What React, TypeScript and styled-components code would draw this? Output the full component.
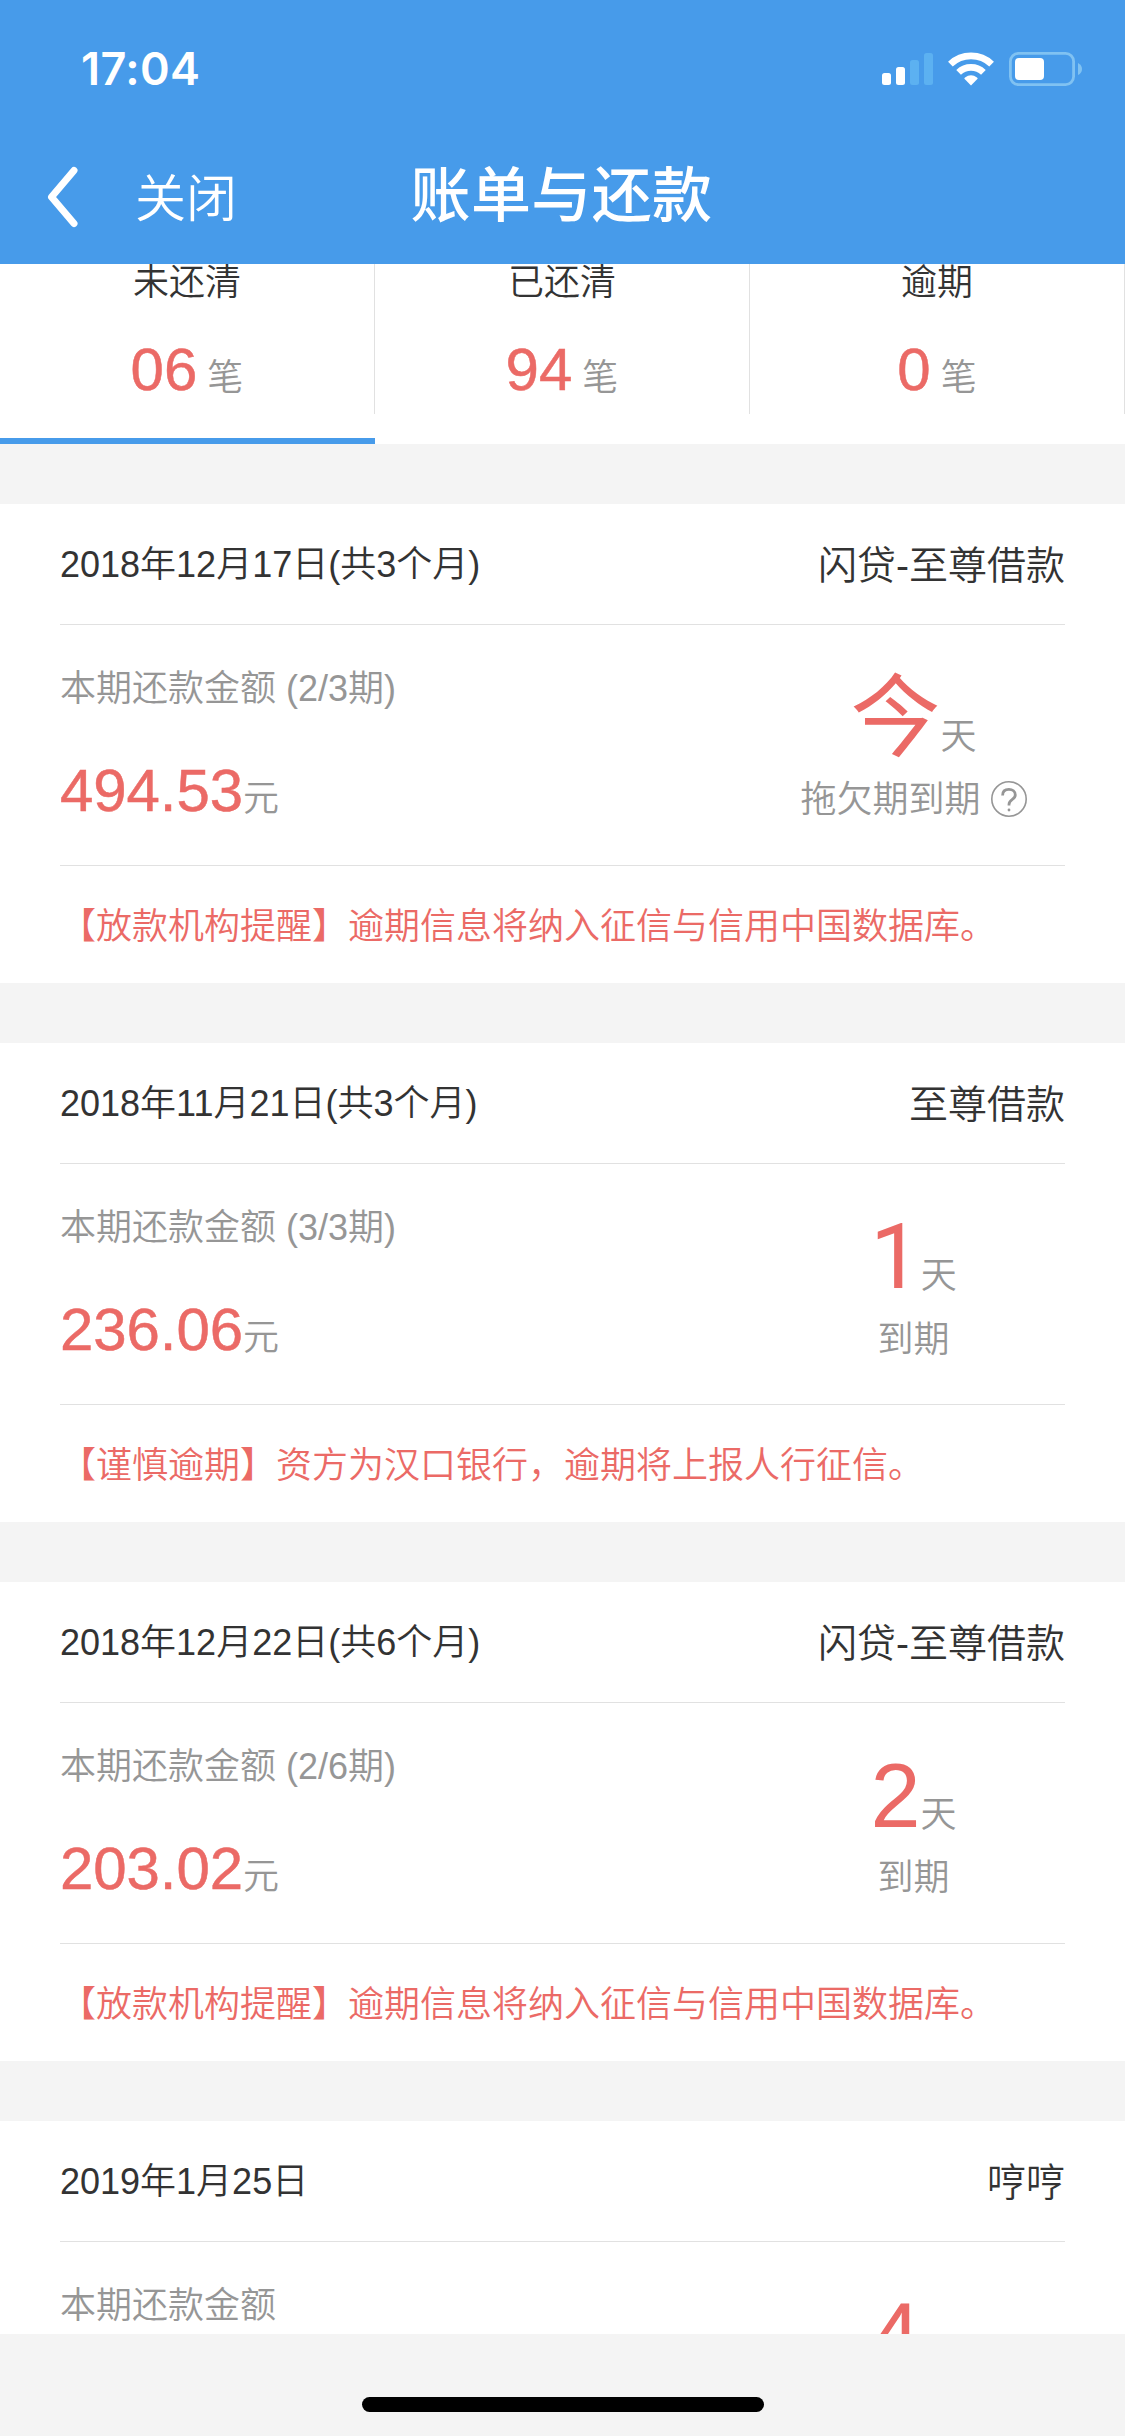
import React from 'react';
import styled, { createGlobalStyle } from 'styled-components';

const BLUE = '#479bea';
const RED = '#eb6a66';
const GRAY = '#969696';
const LINE = '#e1e1e1';

const GlobalStyle = createGlobalStyle`
  *, *::before, *::after { box-sizing: border-box; }
  body {
    margin: 0;
    background: #f4f4f4;
    font-family: "Liberation Sans", "Noto Sans CJK SC", sans-serif;
    font-weight: 350;
    color: #333;
  }
`;

const Screen = styled.div`
  display: flex;
  flex-direction: column;
  width: 1125px;
  height: 2436px;
  overflow: hidden;
  background: #f4f4f4;
`;

const Header = styled.header`
  flex: none;
  height: 264px;
  background: ${BLUE};
  color: #fff;
`;

const StatusBar = styled.div`
  display: flex;
  align-items: center;
  justify-content: space-between;
  height: 138px;
  padding: 0 42px 0 81px;
`;

const Clock = styled.span`
  font: 600 45px/60px Inter, sans-serif;
  letter-spacing: 0.4px;
`;

const StatusIcons = styled.div`
  display: flex;
  align-items: center;

  svg { display: block; }
`;

const NavBar = styled.nav`
  display: grid;
  grid-template-columns: 360px 1fr 362px;
  align-items: center;
  height: 118px;
`;

const NavLeft = styled.div`
  display: flex;
  align-items: center;
  padding-left: 46px;

  svg { display: block; }
`;

const CloseLabel = styled.span`
  margin-left: 55px;
  padding-top: 6px;
  font-size: 51px;
  font-weight: 350;
  line-height: 64px;
`;

const Title = styled.h1`
  margin: 0;
  font-size: 60px;
  font-weight: 500;
  line-height: 76px;
  letter-spacing: 0.4px;
  text-align: center;
`;

const Content = styled.main`
  flex: none;
  display: flex;
  flex-direction: column;
  gap: 60px;
  height: 2070px;
`;

const Tabs = styled.div`
  flex: none;
  display: grid;
  grid-template-columns: repeat(3, 1fr);
  height: 180px;
  background: #fff;
`;

const Tab = styled.div<{ $active?: boolean }>`
  display: flex;
  flex-direction: column;
  border-bottom: 6px solid ${(p) => (p.$active ? BLUE : '#fff')};
`;

const TabBody = styled.div`
  display: flex;
  flex-direction: column;
  align-items: center;
  height: 150px;
  border-right: 1px solid ${LINE};
`;

const TabName = styled.span`
  font-size: 36px;
  line-height: 37px;
`;

const TabCount = styled.span`
  margin-top: 29px;
  color: ${RED};
  font-size: 60px;
  line-height: 80px;
  -webkit-text-stroke: 0.5px ${RED};
`;

const Unit = styled.span<{ $gap?: boolean }>`
  margin-left: ${(p) => (p.$gap ? 10 : 0)}px;
  color: ${GRAY};
  font-size: 36px;
  line-height: 1;
  -webkit-text-stroke: 0;
`;

const Card = styled.section`
  flex: none;
  height: 479px;
  padding: 0 60px;
  background: #fff;
`;

const CardHead = styled.div`
  display: flex;
  justify-content: space-between;
  height: 121px;
  border-bottom: 1px solid ${LINE};
`;

const DateText = styled.span`
  font-size: 36px;
  line-height: 121px;
`;

const Product = styled.span`
  font-size: 39px;
  line-height: 123px;
`;

const CardBody = styled.div`
  display: flex;
  justify-content: space-between;
  height: 241px;
  border-bottom: 1px solid ${LINE};
`;

const Payment = styled.div`
  display: flex;
  flex-direction: column;
  padding-top: 39px;
`;

const Label = styled.span`
  color: ${GRAY};
  font-size: 36px;
  line-height: 49px;
`;

const Amount = styled.span`
  margin-top: 37px;
  color: ${RED};
  font-size: 60px;
  line-height: 81px;
  letter-spacing: -0.1px;
  -webkit-text-stroke: 0.5px ${RED};
`;

const Due = styled.div`
  display: flex;
  flex-direction: column;
  align-items: center;
  width: 303px;
  padding-top: 41px;
`;

const Days = styled.span`
  color: ${RED};
  font-size: 90px;
  font-weight: 400;
  line-height: 104px;
`;

const DaysUnit = styled(Unit)`
  font-weight: 350;
`;

/* A lone "1" is set without the foot that the text face gives it. */
const DayCount = styled.span<{ $footless: boolean }>`
  font-family: ${(p) => (p.$footless ? 'Roboto, sans-serif' : 'inherit')};
`;

const DueNote = styled.div`
  display: flex;
  align-items: center;
  margin-top: 5px;
  color: ${GRAY};
  font-size: 36px;
  line-height: 50px;
`;

const HelpIcon = styled.svg`
  display: block;
  margin: 0 0 3px 10px;
`;

const Notice = styled.p`
  margin: 0;
  color: ${RED};
  font-size: 36px;
  line-height: 122px;
`;

const HomeArea = styled.footer`
  position: relative;
  display: flex;
  justify-content: center;
  height: 102px;
  padding-top: 63px;
  background: #f4f4f4;
`;

const HomeIndicator = styled.div`
  width: 402px;
  height: 15px;
  border-radius: 8px;
  background: #000;
`;

const WifiSvg = styled.svg`
  margin-left: 14px;
`;

const BatterySvg = styled.svg`
  margin-left: 15px;
`;

const Signal = () => (
  <svg width="52" height="34" viewBox="0 0 52 34">
    <rect x="0" y="21" width="9" height="12" rx="2.5" fill="#fff" />
    <rect x="14" y="15" width="9" height="18" rx="2.5" fill="#fff" />
    <rect x="28" y="8" width="9" height="25" rx="2.5" fill="#5cb1f1" />
    <rect x="42" y="1" width="9" height="32" rx="2.5" fill="#5cb1f1" />
  </svg>
);

const Wifi = () => (
  <WifiSvg width="46" height="34" viewBox="0 0 46 34">
    <g fill="none" stroke="#fff" strokeWidth="6.8">
      <path d="M2.4 12.1A30 30 0 0 1 43.6 12.1" />
      <path d="M10.6 20.4A18 18 0 0 1 35.4 20.4" />
    </g>
    <path d="M23 33.4 16.4 26.8Q16.2 26 17 25.4A10.6 10.6 0 0 1 29 25.4Q29.8 26 29.6 26.8Z" fill="#fff" />
  </WifiSvg>
);

const Battery = () => (
  <BatterySvg width="74" height="34" viewBox="0 0 74 34">
    <rect x="1.4" y="1.4" width="63.2" height="31.2" rx="8" fill="none" stroke="#80c2f2" strokeWidth="2.8" />
    <rect x="6" y="6" width="29" height="22" rx="4" fill="#fff" />
    <path d="M69 11Q73 13 73 17T69 23Z" fill="#80c2f2" />
  </BatterySvg>
);

const Back = () => (
  <svg width="34" height="64" viewBox="0 0 34 64">
    <path d="M28 5.5 5.5 32 28 58.5" fill="none" stroke="#fff" strokeWidth="7" strokeLinecap="round" strokeLinejoin="round" />
  </svg>
);

const Help = () => (
  <HelpIcon width="36" height="36" viewBox="0 0 36 36" fill="none" stroke={GRAY}>
    <circle cx="18" cy="18" r="17.2" strokeWidth="1.6" />
    <path d="M11.6 14.4C11.6 10.4 14.3 8.4 17.9 8.4S24.3 10.5 24.3 14C24.3 18.8 18 18 18 23.6V24.6" strokeWidth="2.8" />
    <circle cx="18" cy="29" r="1.4" fill={GRAY} stroke="none" />
  </HelpIcon>
);

const tabs = [
  { name: '未还清', count: '06' },
  { name: '已还清', count: '94' },
  { name: '逾期', count: '0' },
];

type Bill = {
  date: string;
  product: string;
  label: string;
  amount: string;
  days: string;
  due: string;
  help?: boolean;
  notice?: string;
};

const bills: Bill[] = [
  {
    date: '2018年12月17日(共3个月)',
    product: '闪贷-至尊借款',
    label: '本期还款金额 (2/3期)',
    amount: '494.53',
    days: '今',
    due: '拖欠期到期',
    help: true,
    notice: '【放款机构提醒】逾期信息将纳入征信与信用中国数据库。',
  },
  {
    date: '2018年11月21日(共3个月)',
    product: '至尊借款',
    label: '本期还款金额 (3/3期)',
    amount: '236.06',
    days: '1',
    due: '到期',
    notice: '【谨慎逾期】资方为汉口银行，逾期将上报人行征信。',
  },
  {
    date: '2018年12月22日(共6个月)',
    product: '闪贷-至尊借款',
    label: '本期还款金额 (2/6期)',
    amount: '203.02',
    days: '2',
    due: '到期',
    notice: '【放款机构提醒】逾期信息将纳入征信与信用中国数据库。',
  },
];

const BillCard = ({ bill }: { bill: Bill }) => (
  <Card>
    <CardHead>
      <DateText>{bill.date}</DateText>
      <Product>{bill.product}</Product>
    </CardHead>
    <CardBody>
      <Payment>
        <Label>{bill.label}</Label>
        <Amount>
          {bill.amount}
          <Unit>元</Unit>
        </Amount>
      </Payment>
      <Due>
        <Days>
          <DayCount $footless={bill.days === '1'}>{bill.days}</DayCount>
          <DaysUnit>天</DaysUnit>
        </Days>
        <DueNote>
          {bill.due}
          {bill.help && <Help />}
        </DueNote>
      </Due>
    </CardBody>
    <Notice>{bill.notice}</Notice>
  </Card>
);

/* The last bill is scrolled under the bottom edge: only its upper part shows. */
const PartialBill = () => (
  <Card>
    <CardHead>
      <DateText>2019年1月25日</DateText>
      <Product>哼哼</Product>
    </CardHead>
    <CardBody>
      <Payment>
        <Label>本期还款金额</Label>
      </Payment>
      <Due>
        <Days>
          4<DaysUnit>天</DaysUnit>
        </Days>
      </Due>
    </CardBody>
  </Card>
);

export default function App() {
  return (
    <Screen>
      <GlobalStyle />
      <Header>
        <StatusBar>
          <Clock>17:04</Clock>
          <StatusIcons>
            <Signal />
            <Wifi />
            <Battery />
          </StatusIcons>
        </StatusBar>
        <NavBar>
          <NavLeft>
            <Back />
            <CloseLabel>关闭</CloseLabel>
          </NavLeft>
          <Title>账单与还款</Title>
        </NavBar>
      </Header>
      <Content>
        <Tabs>
          {tabs.map((tab, i) => (
            <Tab key={tab.name} $active={i === 0}>
              <TabBody>
                <TabName>{tab.name}</TabName>
                <TabCount>
                  {tab.count}
                  <Unit $gap>笔</Unit>
                </TabCount>
              </TabBody>
            </Tab>
          ))}
        </Tabs>
        {bills.map((bill) => (
          <BillCard key={bill.date} bill={bill} />
        ))}
        <PartialBill />
      </Content>
      <HomeArea>
        <HomeIndicator />
      </HomeArea>
    </Screen>
  );
}
